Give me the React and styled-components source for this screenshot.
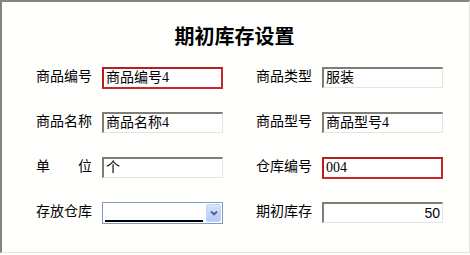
import React from 'react';
import styled, { createGlobalStyle } from 'styled-components';

const GlobalStyle = createGlobalStyle`
  html, body {
    margin: 0;
    padding: 0;
    background: #ffffff;
  }
`;

const Frame = styled.div`
  box-sizing: border-box;
  width: 470px;
  height: 253px;
  border-top: 2px solid #85857c;
  border-left: 2px solid #85857c;
  border-right: 1px solid #e6e4da;
  border-bottom: 1px solid #e6e4da;
  background: #fffffe;
  padding: 22px 0 0 34px;
  font-family: "Noto Sans CJK SC", "Liberation Sans", sans-serif;
  color: #000;
`;

const Title = styled.h1`
  margin: 0 0 19px -34px;
  font-size: 20px;
  line-height: 24px;
  font-weight: bold;
  text-align: center;
  padding-right: 2px;
`;

const Form = styled.div`
  display: grid;
  grid-template-columns: 220px 220px;
  grid-auto-rows: 22px;
  row-gap: 23px;
`;

const Field = styled.div`
  display: flex;
  align-items: flex-start;
`;

const Label = styled.span`
  box-sizing: border-box;
  width: 66px;
  padding-right: 10px;
  margin-top: -2px;
  font-size: 14px;
  line-height: 20px;
  white-space: nowrap;
  display: flex;
  justify-content: space-between;
`;

const Input = styled.div`
  box-sizing: border-box;
  width: 121px;
  height: ${p => (p.$error ? '22px' : '21px')};
  padding: 0 2px 0 2px;
  background: #fff;
  font-family: ${p => (p.$num ? '"Liberation Sans", sans-serif' : '"Liberation Serif", "Noto Sans CJK SC", serif')};
  font-size: 14px;
  line-height: 18px;
  text-align: ${p => (p.$num ? 'right' : 'left')};
  white-space: nowrap;
  overflow: hidden;
  ${p =>
    p.$error
      ? `
    border: 2px solid #c8282c;
    border-top-color: #b81f22;
    border-left-color: #b81f22;
  `
      : `
    border-top: 2px solid #7e7e76;
    border-left: 2px solid #7e7e76;
    border-right: 1px solid #e8e6dc;
    border-bottom: 1px solid #e8e6dc;
  `}
`;

const Select = styled.div`
  box-sizing: border-box;
  width: 121px;
  height: 22px;
  border: 1px solid #7f9db9;
  background: #fff;
  display: flex;
  align-items: stretch;
`;

const SelectValue = styled.div`
  flex: 1;
  display: flex;
  align-items: flex-end;
  padding: 0 2px 1px 2px;
`;

const SelectLine = styled.span`
  display: block;
  width: 98px;
  height: 2px;
  background: #000;
`;

const SelectButton = styled.div`
  width: 16px;
  margin: 1px;
  border-radius: 2px;
  background: linear-gradient(#d6e2fd, #b7c9f5);
  border: 1px solid #c3d3fd;
  box-sizing: border-box;
  display: flex;
  align-items: center;
  justify-content: center;
`;

const Chevron = () => (
  <svg width="8" height="6" viewBox="0 0 8 6">
    <path d="M1 1.5 L4 4.5 L7 1.5" fill="none" stroke="#4d6185" strokeWidth="1.8" />
  </svg>
);

const App = () => {
  return (
    <>
      <GlobalStyle />
      <Frame>
        <Title>期初库存设置</Title>
        <Form>
          <Field>
            <Label>商品编号</Label>
            <Input $error>商品编号4</Input>
          </Field>
          <Field>
            <Label>商品类型</Label>
            <Input>服装</Input>
          </Field>
          <Field>
            <Label>商品名称</Label>
            <Input>商品名称4</Input>
          </Field>
          <Field>
            <Label>商品型号</Label>
            <Input>商品型号4</Input>
          </Field>
          <Field>
            <Label>
              <span>单</span>
              <span>位</span>
            </Label>
            <Input>个</Input>
          </Field>
          <Field>
            <Label>仓库编号</Label>
            <Input $error>004</Input>
          </Field>
          <Field>
            <Label>存放仓库</Label>
            <Select>
              <SelectValue>
                <SelectLine />
              </SelectValue>
              <SelectButton>
                <Chevron />
              </SelectButton>
            </Select>
          </Field>
          <Field>
            <Label>期初库存</Label>
            <Input $num>50</Input>
          </Field>
        </Form>
      </Frame>
    </>
  );
};

export default App;
